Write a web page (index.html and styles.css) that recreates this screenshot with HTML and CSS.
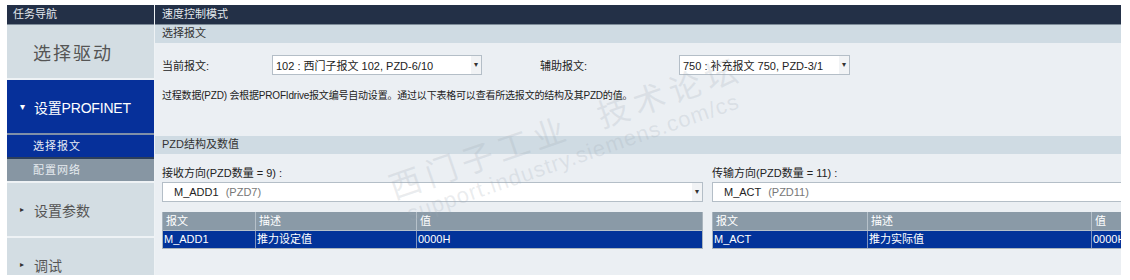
FILE: index.html
```html
<!DOCTYPE html>
<html lang="zh">
<head>
<meta charset="utf-8">
<link rel="stylesheet" href="styles.css">
</head>
<body>
<div class="app">
  <aside class="nav">
    <div class="nav-head">任务导航</div>
    <div class="nav-item plain center">选择驱动</div>
    <div class="nav-item active"><span class="caret">▾</span>设置PROFINET</div>
    <div class="sub sub-active">选择报文</div>
    <div class="sub sub-gray">配置网络</div>
    <div class="nav-item plain"><span class="caret small">▸</span>设置参数</div>
    <div class="nav-item plain"><span class="caret small">▸</span>调试</div>
  </aside>
  <main class="content">
    <div class="head">速度控制模式</div>
    <div class="sect-head">选择报文</div>
    <div class="sect-body first">
      <div class="tele-row">
        <span class="lbl1">当前报文:</span>
        <div class="select s1"><span class="val">102 : 西门子报文 102, PZD-6/10</span><span class="arrow">▾</span></div>
        <span class="lbl2">辅助报文:</span>
        <div class="select s2"><span class="val">750 : 补充报文 750, PZD-3/1</span><span class="arrow">▾</span></div>
      </div>
      <p class="desc">过程数据(PZD) 会根据PROFIdrive报文编号自动设置。通过以下表格可以查看所选报文的结构及其PZD的值。</p>
    </div>
    <div class="sect-head">PZD结构及数值</div>
    <div class="sect-body second">
      <div class="pane">
        <div class="pane-lbl">接收方向(PZD数量 = 9) :</div>
        <div class="select wide"><span class="val">M_ADD1 <em>(PZD7)</em></span><span class="arrow">▾</span></div>
        <div class="tbl left">
          <div class="th">报文</div><div class="th">描述</div><div class="th">值</div>
          <div class="td">M_ADD1</div><div class="td">推力设定值</div><div class="td">0000H</div>
        </div>
      </div>
      <div class="pane">
        <div class="pane-lbl">传输方向(PZD数量 = 11) :</div>
        <div class="select wide"><span class="val">M_ACT <em>(PZD11)</em></span></div>
        <div class="tbl right">
          <div class="th">报文</div><div class="th">描述</div><div class="th">值</div>
          <div class="td">M_ACT</div><div class="td">推力实际值</div><div class="td">0000H</div>
        </div>
      </div>
    </div>
    <div class="watermark">
      <span class="wm1">西门子工业&nbsp;&nbsp;技术论坛</span>
      <span class="wm2">support.industry.siemens.com/cs</span>
    </div>
  </main>
</div>
</body>
</html>
```
FILE: styles.css
```css
* { box-sizing: border-box; }
html, body { margin: 0; padding: 0; background: #fff; }
body {
  font-family: "Liberation Sans", "Noto Sans CJK SC", sans-serif;
  font-size: 11px;
  color: #222;
}
.app {
  display: flex;
  margin: 5px 0 0 7px;
  width: 1114px;
  height: 270px;
  overflow: hidden;
}
.nav {
  width: 148px;
  flex: none;
  background: #d3dde3;
  border-right: 1px solid #eef2f5;
  display: flex;
  flex-direction: column;
}
.nav-head {
  height: 20px;
  background: #233047;
  border-bottom: 1px solid #7e8c99;
  color: #e4e9ee;
  font-size: 11px;
  line-height: 19px;
  padding-left: 6px;
  flex: none;
}
.nav-item {
  height: 55px;
  flex: none;
  display: flex;
  align-items: center;
  padding-left: 13px;
  font-size: 14px;
  color: #555;
  border-bottom: 2px solid #eef2f5;
}
.nav-item.center { padding-left: 26px; font-size: 18px; letter-spacing: 2px; }
.nav-item.active {
  background: #06309a;
  color: #fff;
  font-size: 14px;
  letter-spacing: -0.2px;
  border-bottom: 2px solid #7f8fa8;
}
.caret { font-size: 10px; width: 14px; display: inline-block; }
.caret.small { font-size: 8px; color: #333; }
.sub {
  height: 24px;
  flex: none;
  padding-left: 26px;
  line-height: 22px;
  font-size: 11px;
  letter-spacing: 1px;
}
.sub-active { background: #06309a; color: #e8ecf5; border-bottom: 2px solid #2d3f5a; }
.sub-gray { background: #8796a3; color: #e6ebef; border-bottom: 2px solid #eef2f5; }

.content {
  position: relative;
  flex: 1;
  background: #ebeff3;
  overflow: hidden;
}
.head {
  height: 20px;
  background: #233047;
  border-bottom: 1px solid #7e8c99;
  color: #e4e9ee;
  line-height: 19px;
  padding-left: 7px;
}
.sect-head {
  height: 18px;
  background: #cfdbe3;
  line-height: 17px;
  padding-left: 7px;
  color: #333;
}
.sect-body { padding: 0 7px; }
.sect-body.first { height: 93px; padding-top: 12px; }
.tele-row { display: flex; align-items: center; }
.lbl1 { width: 110px; }
.lbl2 { margin-left: 58px; width: 139px; }
.select {
  height: 20px;
  background: #fff;
  border: 1px solid #b4bec7;
  display: flex;
  align-items: center;
  justify-content: space-between;
  padding-left: 3px;
  color: #222;
  overflow: hidden;
  white-space: nowrap;
}
.select .arrow {
  width: 10px;
  height: 18px;
  background: #f1f3f5;
  font-size: 8px;
  line-height: 18px;
  text-align: center;
  color: #333;
  flex: none;
}
.s1 { width: 210px; }
.s2 { width: 171px; }
.desc { margin: 14px 0 0; line-height: 14px; font-size: 10px; letter-spacing: -0.2px; }

.sect-body.second { display: flex; gap: 9px; padding-top: 12px; }
.pane { width: 541px; flex: none; }
.pane-lbl { height: 16px; line-height: 14px; }
.select.wide { width: 100%; height: 20px; padding-left: 11px; }
.select.wide em { font-style: normal; color: #777; margin-left: 4px; }
.tbl {
  margin-top: 10px;
  display: grid;
  border: 1px solid #a9b4bd;
  border-top: none;
}
.tbl.left { grid-template-columns: 93px 161px 1fr; }
.tbl.right { grid-template-columns: 155px 224px 1fr; }
.th {
  background: #8a9aa7;
  color: #fff;
  height: 19px;
  line-height: 18px;
  padding-left: 3px;
  border-right: 1px solid #b6c1ca;
  border-bottom: 1px solid #b6c1ca;
}
.td {
  background: #02339a;
  color: #fff;
  height: 17px;
  line-height: 16px;
  padding-left: 1px;
  border-right: 1px solid #7f93bd;
}
.th:nth-child(3), .td:nth-child(6) { border-right: none; }

.watermark {
  position: absolute;
  left: 230px;
  top: 168px;
  transform: rotate(-19deg);
  transform-origin: left top;
  pointer-events: none;
  display: flex;
  flex-direction: column;
  line-height: 1.1;
  color: rgba(160, 170, 180, 0.22);
}
.wm1 { font-size: 32px; letter-spacing: 6px; white-space: nowrap; }
.wm2 { font-size: 22px; margin-left: 8px; white-space: nowrap; letter-spacing: 1px; }
```
